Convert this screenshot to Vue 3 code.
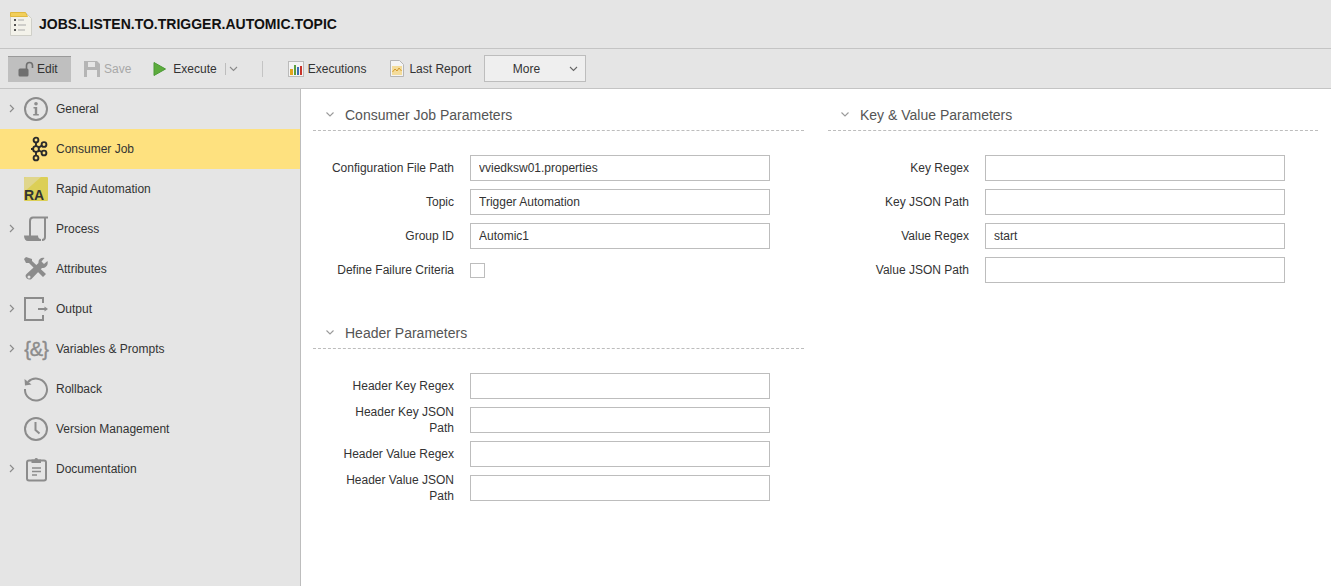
<script setup>
const nav = [
  { label: 'General', icon: 'info', arrow: true },
  { label: 'Consumer Job', icon: 'kafka', active: true },
  { label: 'Rapid Automation', icon: 'ra' },
  { label: 'Process', icon: 'process', arrow: true },
  { label: 'Attributes', icon: 'tools' },
  { label: 'Output', icon: 'output', arrow: true },
  { label: 'Variables & Prompts', icon: 'vars', arrow: true },
  { label: 'Rollback', icon: 'rollback' },
  { label: 'Version Management', icon: 'clock' },
  { label: 'Documentation', icon: 'doc', arrow: true },
]

const consumerFields = [
  { label: 'Configuration File Path', value: 'vviedksw01.properties' },
  { label: 'Topic', value: 'Trigger Automation' },
  { label: 'Group ID', value: 'Automic1' },
  { label: 'Define Failure Criteria', check: true },
]

const headerFields = [
  { label: 'Header Key Regex', value: '' },
  { label: 'Header Key JSON Path', value: '' },
  { label: 'Header Value Regex', value: '' },
  { label: 'Header Value JSON Path', value: '' },
]

const keyFields = [
  { label: 'Key Regex', value: '' },
  { label: 'Key JSON Path', value: '' },
  { label: 'Value Regex', value: 'start' },
  { label: 'Value JSON Path', value: '' },
]
</script>

<template>
  <div class="page">
    <header class="title-bar">
      <svg class="job-icon" width="24" height="26" viewBox="0 0 24 26">
        <path d="M1.500 2.500h16l5 5v17h-21z" fill="#f3f2ea" stroke="#cfcfc8" />
        <path d="M1.500 1.500h15l2 4H1.500z" fill="#f2cf5a" stroke="#e0b93f" />
        <rect x="5" y="8" width="2" height="2" fill="#555" />
        <rect x="5" y="13" width="2" height="2" fill="#555" />
        <rect x="5" y="18" width="2" height="2" fill="#555" />
        <path d="M9 9h6M9 14h8M9 19h7" stroke="#aaa" stroke-width="1" />
      </svg>
      <h1>JOBS.LISTEN.TO.TRIGGER.AUTOMIC.TOPIC</h1>
    </header>

    <div class="toolbar">
      <button class="tool edit">
        <svg width="16" height="16" viewBox="0 0 16 16">
          <rect x="0.500" y="7.500" width="10" height="8" rx="1.500" fill="#6f6f6f" />
          <path d="M8.500 8V4.500a3 3 0 0 1 6 0V7" fill="none" stroke="#6f6f6f" stroke-width="1.600" />
        </svg>
        <span>Edit</span>
      </button>
      <button class="tool save">
        <svg width="16" height="16" viewBox="0 0 16 16">
          <path d="M0 0h13l3 3v13H0z" fill="#b5b5b5" />
          <rect x="4" y="1" width="7" height="5" fill="#e6e6e6" />
          <rect x="3" y="9" width="10" height="7" fill="#e6e6e6" />
        </svg>
        <span>Save</span>
      </button>
      <button class="tool execute">
        <svg width="13" height="14" viewBox="0 0 13 14">
          <path d="M1 0.500 12.500 7 1 13.500z" fill="#5cab3c" stroke="#4a9a35" />
        </svg>
        <span>Execute</span>
        <i class="sep-small"></i>
        <svg class="chev" width="9" height="6" viewBox="0 0 9 6">
          <path d="M1 1l3.500 3.500L8 1" fill="none" stroke="#8a8a8a" stroke-width="1.100" />
        </svg>
      </button>
      <i class="tool-sep"></i>
      <button class="tool executions">
        <svg width="16" height="16" viewBox="0 0 16 16">
          <rect x="0.500" y="0.500" width="15" height="15" fill="#f4f4f4" stroke="#bbb" />
          <rect x="2" y="8" width="3" height="6" fill="#e3a51f" />
          <rect x="6" y="4" width="2" height="10" fill="#5a9e3c" />
          <rect x="9" y="6" width="2" height="8" fill="#3a6fb5" />
          <rect x="12" y="5" width="2" height="9" fill="#c8342b" />
        </svg>
        <span>Executions</span>
      </button>
      <button class="tool report">
        <svg width="14" height="17" viewBox="0 0 14 17">
          <path d="M0.500 0.500h9l4 4v12h-13z" fill="#f4f4f4" stroke="#b5b5b5" />
          <rect x="2" y="6" width="10" height="9" fill="#f4dc9b" />
          <path d="M2.500 12l2.500-3 2 2 2-3 2.500 3" fill="none" stroke="#d39a2c" />
        </svg>
        <span>Last Report</span>
      </button>
      <button class="more">
        <span>More</span>
        <svg class="more-chev" width="9" height="6" viewBox="0 0 9 6">
          <path d="M1 1l3.500 3.500L8 1" fill="none" stroke="#666" stroke-width="1.100" />
        </svg>
      </button>
    </div>

    <div class="body">
      <aside class="sidebar">
        <div v-for="item in nav" :key="item.label" class="nav-item" :class="{ active: item.active }">
          <svg v-if="item.arrow" class="nav-arrow" width="6" height="9" viewBox="0 0 6 9">
            <path d="M1 1l3.500 3.500L1 8" fill="none" stroke="#8c8c8c" stroke-width="1.200" />
          </svg>
          <svg class="nav-icon" width="26" height="26" viewBox="0 0 26 26">
            <template v-if="item.icon === 'info'">
              <circle cx="12" cy="13" r="11" fill="none" stroke="#8c8c8c" stroke-width="2" />
              <circle cx="12" cy="7.800" r="1.800" fill="#8c8c8c" />
              <path d="M9.500 11h3.700v7h1.600v1.600H9.200V18h1.600v-5.400H9.500z" fill="#8c8c8c" />
            </template>
            <template v-else-if="item.icon === 'kafka'">
              <g fill="none" stroke="#2b2b2b" stroke-width="1.900">
                <circle cx="12" cy="4" r="2.400" />
                <circle cx="12" cy="13" r="2.900" />
                <circle cx="12" cy="22" r="2.400" />
                <circle cx="20" cy="8.500" r="2.400" />
                <circle cx="20" cy="17" r="2.400" />
                <path d="M12 6.400v3.700M12 15.900v3.700M14.500 11.600l3.400-2M14.500 14.400l3.400 1.600M9 13H7" />
              </g>
            </template>
            <template v-else-if="item.icon === 'ra'">
              <rect width="24" height="24" y="1" rx="1" fill="#dccf56" />
              <path d="M0 16 17 1H2a2 2 0 0 0-2 2z" fill="#e0d68c" />
              <text x="0" y="24" class="ra-text">RA</text>
            </template>
            <template v-else-if="item.icon === 'process'">
              <path d="M6 20V5C6 3 7 1.500 9 1.500h15M21 2v19c0 2-1 3-3 3" fill="none" stroke="#8c8c8c" stroke-width="2" />
              <path d="M0 19.500h14c0 2 1 3.500 3 3.500v2H4c-2.500 0-4-2-4-5.500z" fill="#8c8c8c" />
            </template>
            <template v-else-if="item.icon === 'tools'">
              <path d="M2 1 0 3l2 4h3l14 14 3-3L8 5V3z" fill="#8c8c8c" />
              <path d="M23.500 5 20 8l-2.500-2.500 3-3.500c-3-1-6.500 1-6 5L2.500 18c-3 3 2 7 5 5L18 12c4 0 6.500-3 5.500-7z" fill="#8c8c8c" />
              <circle cx="5" cy="21" r="1.500" fill="#e5e5e5" />
            </template>
            <template v-else-if="item.icon === 'output'">
              <path d="M19 7V2H1v22h18v-5" fill="none" stroke="#8c8c8c" stroke-width="2" />
              <path d="M14 13h8" stroke="#8c8c8c" stroke-width="2" />
              <path d="M20.500 10.500 24 13l-3.500 2.500z" fill="#8c8c8c" />
            </template>
            <template v-else-if="item.icon === 'vars'">
              <text x="12" y="20" class="vars-text">{&amp;}</text>
            </template>
            <template v-else-if="item.icon === 'rollback'">
              <path d="M4 6A11 11 0 1 1 1 13" fill="none" stroke="#8c8c8c" stroke-width="2" />
              <path d="M0.500 3l.5 6.500 6.500-1z" fill="#8c8c8c" />
            </template>
            <template v-else-if="item.icon === 'clock'">
              <circle cx="12" cy="13" r="11" fill="none" stroke="#8c8c8c" stroke-width="2" />
              <path d="M11.500 6v8l4 3.500" fill="none" stroke="#8c8c8c" stroke-width="2" />
            </template>
            <template v-else-if="item.icon === 'doc'">
              <rect x="3" y="4.500" width="19" height="20" rx="2" fill="none" stroke="#8c8c8c" stroke-width="2" />
              <path d="M7.500 3.500h3a1.800 1.800 0 0 1 3.500 0h3V7H7.500z" fill="#8c8c8c" />
              <path d="M8 12h9M8 15.500h9M8 19h5" stroke="#8c8c8c" stroke-width="1.600" />
            </template>
          </svg>
          <span class="nav-label">{{ item.label }}</span>
        </div>
      </aside>

      <main class="content">
        <div class="column">
          <section class="panel">
            <div class="panel-head">
              <svg width="8" height="5" viewBox="0 0 8 5"><path d="M0.500 0.500 4 4l3.500-3.500" fill="none" stroke="#9a9a9a" stroke-width="1.100" /></svg>
              <h2>Consumer Job Parameters</h2>
            </div>
            <div class="fields">
              <div v-for="f in consumerFields" :key="f.label" class="field">
                <label>{{ f.label }}</label>
                <span v-if="f.check" class="checkbox"></span>
                <input v-else type="text" :value="f.value" />
              </div>
            </div>
          </section>
          <section class="panel second">
            <div class="panel-head">
              <svg width="8" height="5" viewBox="0 0 8 5"><path d="M0.500 0.500 4 4l3.500-3.500" fill="none" stroke="#9a9a9a" stroke-width="1.100" /></svg>
              <h2>Header Parameters</h2>
            </div>
            <div class="fields">
              <div v-for="f in headerFields" :key="f.label" class="field">
                <label>{{ f.label }}</label>
                <input type="text" :value="f.value" />
              </div>
            </div>
          </section>
        </div>
        <div class="column">
          <section class="panel">
            <div class="panel-head">
              <svg width="8" height="5" viewBox="0 0 8 5"><path d="M0.500 0.500 4 4l3.500-3.500" fill="none" stroke="#9a9a9a" stroke-width="1.100" /></svg>
              <h2>Key &amp; Value Parameters</h2>
            </div>
            <div class="fields">
              <div v-for="f in keyFields" :key="f.label" class="field">
                <label>{{ f.label }}</label>
                <input type="text" :value="f.value" />
              </div>
            </div>
          </section>
        </div>
      </main>
    </div>
  </div>
</template>

<style>
html, body { margin: 0; overflow: hidden; }
</style>

<style scoped>
.page {
  width: 1331px;
  height: 586px;
  display: flex;
  flex-direction: column;
  background: #e5e5e5;
  font-family: "Liberation Sans", Arial, sans-serif;
  font-size: 12px;
  color: #333;
}

.title-bar {
  height: 49px;
  box-sizing: border-box;
  display: flex;
  align-items: center;
  padding-left: 9px;
  border-bottom: 1px solid #c4c4c4;
  flex: none;
}
.job-icon { margin-right: 6px; }
h1 {
  margin: 0;
  font-size: 14px;
  font-weight: bold;
  color: #111;
}

.toolbar {
  height: 40px;
  box-sizing: border-box;
  display: flex;
  align-items: center;
  padding-left: 8px;
  border-bottom: 1px solid #c4c4c4;
  flex: none;
}
.tool {
  display: flex;
  align-items: center;
  height: 26px;
  padding: 0;
  border: 0;
  background: none;
  font: inherit;
  color: #333;
}
.edit {
  width: 63px;
  box-sizing: border-box;
  padding-left: 10px;
  gap: 3px;
  background: #bfbfbf;
  border-top: 1px solid #9a9a9a;
}
.save { margin-left: 13px; color: #a8a8a8; gap: 4px; }
.execute { margin-left: 22px; gap: 7px; }
.sep-small { width: 1px; height: 12px; background: #bdbdbd; margin-left: 1px; }
.chev { margin-left: -4px; }
.tool-sep { width: 1px; height: 16px; background: #c4c4c4; margin: 0 25px 0 24px; }
.executions { gap: 4px; }
.report { margin-left: 24px; gap: 5px; }
.more {
  width: 102px;
  height: 27px;
  margin-left: 13px;
  box-sizing: border-box;
  display: flex;
  align-items: center;
  padding: 0;
  background: #efefef;
  border: 1px solid #bdbdbd;
  font: inherit;
  color: #333;
}
.more span { width: 82px; text-align: center; }
.more-chev { margin-left: 2px; }

.body { flex: 1; display: flex; min-height: 0; }

.sidebar {
  width: 301px;
  box-sizing: border-box;
  border-right: 1px solid #bdbdbd;
  flex: none;
}
.nav-item {
  height: 40px;
  display: flex;
  align-items: center;
  padding-left: 24px;
  position: relative;
}
.nav-item.active { background: #fee17f; }
.nav-arrow { position: absolute; left: 9px; top: 15px; }
.nav-icon { margin-right: 6px; flex: none; }
.nav-label { color: #333; }

.ra-text { font: bold 14px "Liberation Sans", Arial, sans-serif; fill: #333; }
.vars-text { font: 20px "Liberation Sans", Arial, sans-serif; fill: #8c8c8c; stroke: #8c8c8c; stroke-width: 0.4px; text-anchor: middle; letter-spacing: -1px; }

.content {
  flex: 1;
  background: #fff;
  display: flex;
  gap: 24px;
  padding: 0 0 0 12px;
}
.column { width: 491px; }
.column + .column { width: 490px; }

.panel-head {
  height: 42px;
  box-sizing: border-box;
  display: flex;
  align-items: center;
  gap: 11px;
  padding: 10px 0 0 13px;
  border-bottom: 1px dashed #bdbdbd;
}
h2 {
  margin: 0;
  font-size: 14px;
  font-weight: normal;
  color: #555;
}
.second { margin-top: 24px; }
.panel-head + .fields { padding-top: 24px; }

.fields { display: flex; flex-direction: column; gap: 8px; }
.field {
  display: flex;
  align-items: center;
  gap: 16px;
  height: 26px;
}
.field label {
  width: 141px;
  box-sizing: border-box;
  padding-left: 16px;
  text-align: right;
  line-height: 16px;
  color: #333;
  flex: none;
}
.field input {
  width: 300px;
  height: 26px;
  box-sizing: border-box;
  padding: 0 8px;
  border: 1px solid #bdbdbd;
  background: #fff;
  font: inherit;
  color: #333;
  outline: none;
}
.checkbox {
  width: 15px;
  height: 15px;
  box-sizing: border-box;
  border: 1px solid #bdbdbd;
  background: #fff;
}
</style>
